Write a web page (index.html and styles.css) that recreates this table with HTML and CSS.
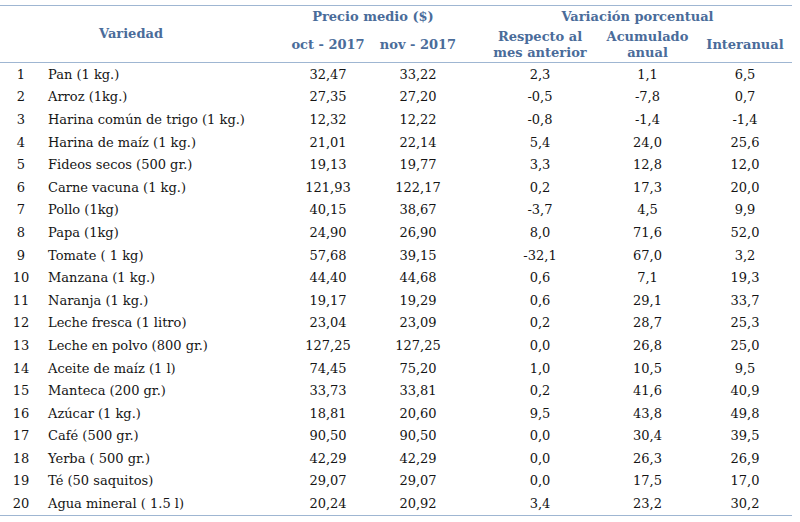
FILE: index.html
```html
<!DOCTYPE html>
<html lang="es">
<head>
<meta charset="utf-8">
<title>Precio medio</title>
<link rel="stylesheet" href="styles.css">
</head>
<body>
<div class="tbl">
  <div class="thead">
    <div class="h h-var">Variedad</div>
    <div class="h h-precio">Precio medio ($)</div>
    <div class="h h-vp">Variación porcentual</div>
    <div class="h h-oct">oct - 2017</div>
    <div class="h h-nov">nov - 2017</div>
    <div class="h h-resp">Respecto al<br>mes anterior</div>
    <div class="h h-acum">Acumulado<br>anual</div>
    <div class="h h-inter">Interanual</div>
  </div>
  <div class="tbody">
    <div class="row"><span class="n">1</span><span class="name">Pan (1 kg.)</span><span></span><span class="c">32,47</span><span class="c">33,22</span><span></span><span class="c">2,3</span><span class="c">1,1</span><span class="c">6,5</span></div>
    <div class="row"><span class="n">2</span><span class="name">Arroz (1kg.)</span><span></span><span class="c">27,35</span><span class="c">27,20</span><span></span><span class="c">-0,5</span><span class="c">-7,8</span><span class="c">0,7</span></div>
    <div class="row"><span class="n">3</span><span class="name">Harina común de trigo (1 kg.)</span><span></span><span class="c">12,32</span><span class="c">12,22</span><span></span><span class="c">-0,8</span><span class="c">-1,4</span><span class="c">-1,4</span></div>
    <div class="row"><span class="n">4</span><span class="name">Harina de maíz (1 kg.)</span><span></span><span class="c">21,01</span><span class="c">22,14</span><span></span><span class="c">5,4</span><span class="c">24,0</span><span class="c">25,6</span></div>
    <div class="row"><span class="n">5</span><span class="name">Fideos secos (500 gr.)</span><span></span><span class="c">19,13</span><span class="c">19,77</span><span></span><span class="c">3,3</span><span class="c">12,8</span><span class="c">12,0</span></div>
    <div class="row"><span class="n">6</span><span class="name">Carne vacuna (1 kg.)</span><span></span><span class="c">121,93</span><span class="c">122,17</span><span></span><span class="c">0,2</span><span class="c">17,3</span><span class="c">20,0</span></div>
    <div class="row"><span class="n">7</span><span class="name">Pollo (1kg)</span><span></span><span class="c">40,15</span><span class="c">38,67</span><span></span><span class="c">-3,7</span><span class="c">4,5</span><span class="c">9,9</span></div>
    <div class="row"><span class="n">8</span><span class="name">Papa (1kg)</span><span></span><span class="c">24,90</span><span class="c">26,90</span><span></span><span class="c">8,0</span><span class="c">71,6</span><span class="c">52,0</span></div>
    <div class="row"><span class="n">9</span><span class="name">Tomate ( 1 kg)</span><span></span><span class="c">57,68</span><span class="c">39,15</span><span></span><span class="c">-32,1</span><span class="c">67,0</span><span class="c">3,2</span></div>
    <div class="row"><span class="n">10</span><span class="name">Manzana (1 kg.)</span><span></span><span class="c">44,40</span><span class="c">44,68</span><span></span><span class="c">0,6</span><span class="c">7,1</span><span class="c">19,3</span></div>
    <div class="row"><span class="n">11</span><span class="name">Naranja (1 kg.)</span><span></span><span class="c">19,17</span><span class="c">19,29</span><span></span><span class="c">0,6</span><span class="c">29,1</span><span class="c">33,7</span></div>
    <div class="row"><span class="n">12</span><span class="name">Leche fresca (1 litro)</span><span></span><span class="c">23,04</span><span class="c">23,09</span><span></span><span class="c">0,2</span><span class="c">28,7</span><span class="c">25,3</span></div>
    <div class="row"><span class="n">13</span><span class="name">Leche en polvo (800 gr.)</span><span></span><span class="c">127,25</span><span class="c">127,25</span><span></span><span class="c">0,0</span><span class="c">26,8</span><span class="c">25,0</span></div>
    <div class="row"><span class="n">14</span><span class="name">Aceite de maíz (1 l)</span><span></span><span class="c">74,45</span><span class="c">75,20</span><span></span><span class="c">1,0</span><span class="c">10,5</span><span class="c">9,5</span></div>
    <div class="row"><span class="n">15</span><span class="name">Manteca (200 gr.)</span><span></span><span class="c">33,73</span><span class="c">33,81</span><span></span><span class="c">0,2</span><span class="c">41,6</span><span class="c">40,9</span></div>
    <div class="row"><span class="n">16</span><span class="name">Azúcar (1 kg.)</span><span></span><span class="c">18,81</span><span class="c">20,60</span><span></span><span class="c">9,5</span><span class="c">43,8</span><span class="c">49,8</span></div>
    <div class="row"><span class="n">17</span><span class="name">Café (500 gr.)</span><span></span><span class="c">90,50</span><span class="c">90,50</span><span></span><span class="c">0,0</span><span class="c">30,4</span><span class="c">39,5</span></div>
    <div class="row"><span class="n">18</span><span class="name">Yerba ( 500 gr.)</span><span></span><span class="c">42,29</span><span class="c">42,29</span><span></span><span class="c">0,0</span><span class="c">26,3</span><span class="c">26,9</span></div>
    <div class="row"><span class="n">19</span><span class="name">Té (50 saquitos)</span><span></span><span class="c">29,07</span><span class="c">29,07</span><span></span><span class="c">0,0</span><span class="c">17,5</span><span class="c">17,0</span></div>
    <div class="row"><span class="n">20</span><span class="name">Agua mineral ( 1.5 l)</span><span></span><span class="c">20,24</span><span class="c">20,92</span><span></span><span class="c">3,4</span><span class="c">23,2</span><span class="c">30,2</span></div>
  </div>
</div>
</body>
</html>
```

FILE: styles.css
```css
html, body {
  margin: 0;
  padding: 0;
  background: #ffffff;
}

body {
  font-family: "DejaVu Serif", "Liberation Serif", serif;
  font-size: 13px;
  color: #151515;
}

.tbl {
  --cols: 42px 220px 21px 90px 90px 20px 114px 101px 94px;
  width: 792px;
  margin-top: 5px;
  border-top: 1px solid #9fb6d2;
  border-bottom: 1px solid #9fb6d2;
}

.thead {
  display: grid;
  grid-template-columns: var(--cols);
  grid-template-rows: 21px 35px;
  border-bottom: 1px solid #9fb6d2;
  color: #4a6c9a;
  font-weight: bold;
  font-size: 13px;
}

.h {
  display: flex;
  align-items: center;
  justify-content: center;
  text-align: center;
  line-height: 16px;
  white-space: nowrap;
}

.h-var { grid-column: 1 / 3; grid-row: 1 / 3; }
.h-precio { grid-column: 4 / 6; grid-row: 1; }
.h-vp { grid-column: 7 / 10; grid-row: 1; }
.h-oct { grid-column: 4; grid-row: 2; }
.h-nov { grid-column: 5; grid-row: 2; }
.h-resp { grid-column: 7; grid-row: 2; }
.h-acum { grid-column: 8; grid-row: 2; }
.h-inter { grid-column: 9; grid-row: 2; }

.row {
  display: grid;
  grid-template-columns: var(--cols);
  height: 22.6px;
  align-items: center;
  white-space: nowrap;
}

.n, .c {
  text-align: center;
}

.name {
  padding-left: 6px;
}
```
